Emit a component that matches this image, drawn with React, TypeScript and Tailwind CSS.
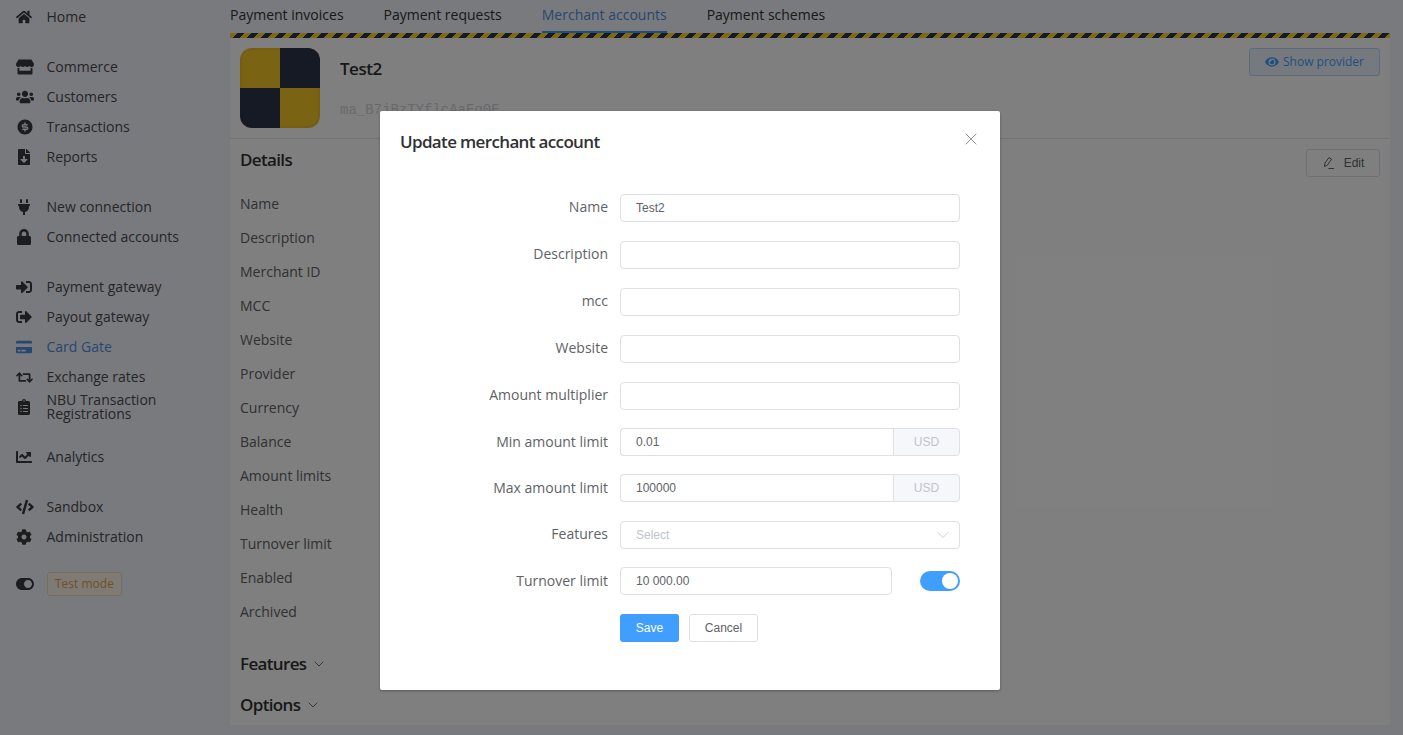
import React from "react";
import {
  FaHome, FaStore, FaUsers, FaFileDownload, FaPlug, FaLock, FaSignInAlt, FaSignOutAlt,
  FaCreditCard, FaRetweet, FaClipboardList, FaChartLine, FaCode, FaCog, FaToggleOn, FaEye,
} from "react-icons/fa";
import { RiMoneyDollarCircleFill } from "react-icons/ri";
import { ChevronDown, X } from "lucide-react";

const navGroups = [
  [{ label: "Home", icon: FaHome, size: "w-4 h-4" }],
  [
    { label: "Commerce", icon: FaStore, size: "w-[18px] h-[16px]" },
    { label: "Customers", icon: FaUsers, size: "w-[18px] h-[18px]" },
    { label: "Transactions", icon: RiMoneyDollarCircleFill, size: "w-[18px] h-[18px]" },
    { label: "Reports", icon: FaFileDownload, size: "w-4 h-4" },
  ],
  [
    { label: "New connection", icon: FaPlug, size: "w-4 h-4" },
    { label: "Connected accounts", icon: FaLock, size: "w-4 h-4" },
  ],
  [
    { label: "Payment gateway", icon: FaSignInAlt, size: "w-4 h-4" },
    { label: "Payout gateway", icon: FaSignOutAlt, size: "w-4 h-4" },
    { label: "Card Gate", icon: FaCreditCard, active: true, size: "w-4 h-4" },
    { label: "Exchange rates", icon: FaRetweet, size: "w-[17px] h-[17px]" },
    { label: "NBU Transaction Registrations", icon: FaClipboardList, size: "w-4 h-4" },
  ],
  [{ label: "Analytics", icon: FaChartLine, size: "w-4 h-4" }],
  [
    { label: "Sandbox", icon: FaCode, size: "w-[18px] h-[18px]" },
    { label: "Administration", icon: FaCog, size: "w-4 h-4" },
  ],
];

const tabs = ["Payment invoices", "Payment requests", "Merchant accounts", "Payment schemes"];

const details = [
  "Name", "Description", "Merchant ID", "MCC", "Website", "Provider", "Currency",
  "Balance", "Amount limits", "Health", "Turnover limit", "Enabled", "Archived",
];

const Sidebar = () => (
  <aside className="w-[230px] shrink-0 pt-[2px] flex flex-col gap-5">
    {navGroups.map((group, i) => (
      <div key={i}>
        {group.map((item: any) => {
          const Icon = item.icon;
          return (
            <div
              key={item.label}
              className={`h-[30px] flex items-center text-[14px] leading-[14px] ${item.active ? "text-[#4f8fdc]" : "text-[#4a4a4e]"}`}
            >
              <span className={`w-[46.5px] pl-[16px] shrink-0 flex ${item.active ? "" : "text-[#3a3a3e]"}`}>
                <Icon className={item.size} />
              </span>
              <span className="w-[150px]">{item.label}</span>
            </div>
          );
        })}
      </div>
    ))}
    <div className="h-6 flex items-center">
      <span className="w-[47px] pl-[16px] flex text-[#3a3a3e]">
        <FaToggleOn className="w-[18px] h-[18px]" />
      </span>
      <span className="h-6 px-[7px] flex items-center rounded-[3px] border border-[#f5dab1] bg-[#fdf6ec] text-[#e6a23c] text-[12px]">
        Test mode
      </span>
    </div>
  </aside>
);

const Main = () => (
  <main className="w-[1160px] flex flex-col">
    <nav className="h-[33px] flex gap-10 text-[14px] text-[#303133]">
      {tabs.map((tab) => (
        <div
          key={tab}
          className={`h-[33px] pt-1 border-b-2 ${tab === "Merchant accounts" ? "text-[#4f8fdc] border-[#409eff]" : "border-transparent"}`}
        >
          {tab}
        </div>
      ))}
    </nav>
    <div className="h-[5px] bg-[repeating-linear-gradient(135deg,#fed22a_0,#fed22a_5px,#2c3449_5px,#2c3449_10px)]" />
    <div className="h-[687px] bg-white">
      <div className="h-[101px] border-b border-[#e6e6e6] pt-[10px] px-[10px] flex">
        <div className="w-20 h-20 grid grid-cols-2 shrink-0">
          <div className="bg-[#f4c926] rounded-tl-xl border-t-2 border-l-2 border-[#e8bd22]" />
          <div className="bg-[#2c3449] rounded-tr-xl" />
          <div className="bg-[#2c3449] rounded-bl-xl" />
          <div className="bg-[#f4c926] rounded-br-xl border-b-2 border-r-2 border-[#e8bd22]" />
        </div>
        <div className="ml-5 flex-1">
          <div className="text-[17px] tracking-[-0.5px] font-semibold text-[#303133] mt-[9px] leading-[24px]">Test2</div>
          <div className="mt-[19px] text-[14px] leading-5 font-['Liberation_Mono',monospace] text-[#d0d3da]">ma_B7jBzTYflcAaEg0E</div>
        </div>
        <button className="h-7 w-[131px] rounded-[3px] border border-[#b3d8ff] bg-[#ecf5ff] text-[#409eff] text-[12px] flex items-center justify-center gap-1">
          <FaEye className="w-[14px] h-[14px]" />
          Show provider
        </button>
      </div>
      <div className="px-[10px] pt-[10px]">
        <div className="flex justify-between items-start">
          <h2 className="text-[17px] tracking-[-0.65px] font-semibold text-[#303133] leading-[22px]">Details</h2>
          <button className="h-7 w-[74px] rounded-[3px] border border-[#dcdfe6] text-[#606266] text-[12px] font-['Liberation_Sans',sans-serif] flex items-center justify-center gap-2">
            <svg viewBox="0 0 14 14" className="w-[14px] h-[14px]" fill="none" stroke="currentColor" strokeWidth="1">
              <path d="M2.5 10.5 L3 7 L7 1.5 L9.5 3.2 L5.5 9 Z M6.5 12.5 H12" />
            </svg>
            Edit
          </button>
        </div>
        <div className="mt-[9px]">
          {details.map((d) => (
            <div key={d} className="h-[34px] flex items-center text-[14px] text-[#606266]">{d}</div>
          ))}
        </div>
        <div className="mt-[24px] h-6 flex items-center gap-[5px] text-[17px] tracking-[-0.65px] font-semibold text-[#303133]">
          Features <ChevronDown className="w-4 h-4 text-[#606266]" strokeWidth={1.4} />
        </div>
        <div className="mt-[17px] h-6 flex items-center gap-[5px] text-[17px] tracking-[-0.65px] font-semibold text-[#303133]">
          Options <ChevronDown className="w-4 h-4 text-[#606266]" strokeWidth={1.4} />
        </div>
      </div>
    </div>
  </main>
);

const inputBox = "h-7 rounded-[4px] border border-[#dcdfe6] bg-white px-[15px] flex items-center text-[12px] text-[#606266] font-['Liberation_Sans',sans-serif]";

const FormRow = ({ label, mb, lift = "pb-[4px]", children }: { label: string; mb: string; lift?: string; children?: React.ReactNode }) => (
  <div className={`flex items-center h-7 ${mb}`}>
    <label className={`w-[220px] pr-3 text-right text-[14px] text-[#606266] shrink-0 ${lift}`}>{label}</label>
    <div className="w-[340px] flex items-center">{children}</div>
  </div>
);

const CurrencyInput = ({ value }: { value: string }) => (
  <div className="w-full flex">
    <div className={`${inputBox} flex-1 rounded-r-none border-r-0`}>{value}</div>
    <div className="h-7 w-[67px] border border-[#dcdfe6] rounded-r-[4px] bg-[#f5f7fa] text-[#c0c4cc] text-[12px] flex items-center justify-center font-['Liberation_Sans',sans-serif]">
      USD
    </div>
  </div>
);

const Dialog = () => (
  <div className="absolute left-[380px] top-[111px] w-[620px] h-[579px] bg-white rounded-[2px] shadow-[0_1px_3px_rgba(0,0,0,0.3)] px-5 pt-5">
    <div className="flex justify-between items-start h-[22px]">
      <h3 className="text-[17px] tracking-[-0.65px] leading-[22px] font-semibold text-[#303133]">Update merchant account</h3>
      <X className="w-5 h-5 text-[#909399] -mr-px -mt-[2px]" strokeWidth={1.2} />
    </div>
    <form className="mt-[41px]">
      <FormRow label="Name" mb="mb-[19px]"><div className={`${inputBox} w-full`}>Test2</div></FormRow>
      <FormRow label="Description" mb="mb-[19px]"><div className={`${inputBox} w-full`} /></FormRow>
      <FormRow label="mcc" mb="mb-[19px]"><div className={`${inputBox} w-full`} /></FormRow>
      <FormRow label="Website" mb="mb-[19px]"><div className={`${inputBox} w-full`} /></FormRow>
      <FormRow label="Amount multiplier" mb="mb-[18px]"><div className={`${inputBox} w-full`} /></FormRow>
      <FormRow label="Min amount limit" lift="pb-[2px]" mb="mb-[18px]"><CurrencyInput value="0.01" /></FormRow>
      <FormRow label="Max amount limit" lift="pb-[2px]" mb="mb-[19px]"><CurrencyInput value="100000" /></FormRow>
      <FormRow label="Features" mb="mb-[18px]">
        <div className={`${inputBox} w-full justify-between !text-[#c0c4cc] !pr-[6px]`}>
          Select
          <ChevronDown className="w-5 h-5 text-[#c0c4cc]" strokeWidth={1} />
        </div>
      </FormRow>
      <FormRow label="Turnover limit" lift="pb-[2px]" mb="mb-[19px]">
        <div className={`${inputBox} w-[272px]`}>10 000.00</div>
        <div className="ml-auto w-10 h-5 rounded-full bg-[#409eff] flex items-center justify-end pr-[2px]">
          <div className="w-4 h-4 rounded-full bg-white" />
        </div>
      </FormRow>
      <div className="flex pl-[220px] gap-[10px] font-['Liberation_Sans',sans-serif] text-[12px]">
        <button type="button" className="h-7 w-[59px] rounded-[3px] bg-[#409eff] text-white">Save</button>
        <button type="button" className="h-7 w-[69px] rounded-[3px] border border-[#dcdfe6] bg-white text-[#606266]">Cancel</button>
      </div>
    </form>
  </div>
);

export default function App() {
  return (
    <div className="relative w-[1403px] h-[735px] overflow-hidden bg-[#f2f5fc] font-['Open_Sans',sans-serif] flex">
      <Sidebar />
      <Main />
      <div className="absolute inset-0 bg-black/50" />
      <Dialog />
    </div>
  );
}
